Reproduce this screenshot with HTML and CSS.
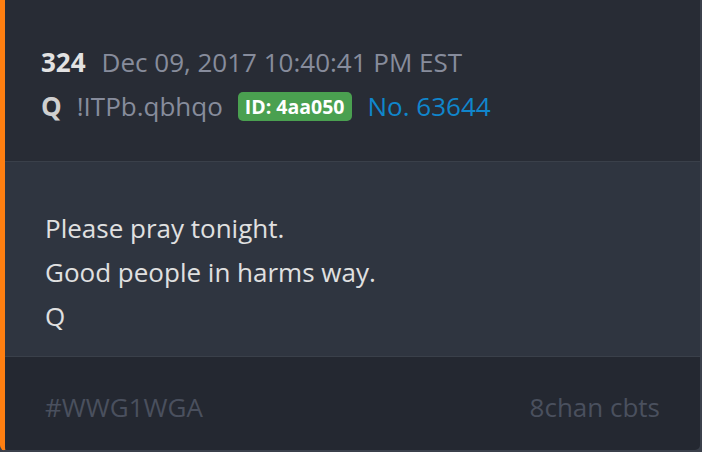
FILE: index.html
```html
<!DOCTYPE html>
<html lang="en">
<head>
    <meta charset="UTF-8">
    <title>Q Post 324</title>
    <link rel="stylesheet" href="styles.css">
</head>
<body>
    <div class="post">
        <div class="post-head">
            <div class="head-row">
                <span class="post-num">324</span>
                <span class="post-date">Dec 09, 2017 10:40:41 PM EST</span>
            </div>
            <div class="head-row">
                <span class="author">Q</span>
                <span class="trip">!ITPb.qbhqo</span>
                <span class="user-id">ID: 4aa050</span>
                <a class="post-link" href="#">No. 63644</a>
            </div>
        </div>
        <div class="post-body">
            <p>Please pray tonight.</p>
            <p>Good people in harms way.</p>
            <p>Q</p>
        </div>
        <div class="post-foot">
            <span>#WWG1WGA</span>
            <span>8chan cbts</span>
        </div>
    </div>
</body>
</html>
```

FILE: styles.css
```css
body {
    margin: 0;
    background-color: #3b404b;
    font-family: "Open Sans", "Noto Sans", sans-serif;
}

.post {
    box-sizing: border-box;
    width: 701px;
    height: 451px;
    display: flex;
    flex-direction: column;
    border: 1px solid #3b414c;
    border-top: none;
    border-left: 5px solid #ff7f11;
    border-radius: 0 0 6px 6px;
    overflow: hidden;
    font-size: 26px;
    line-height: 44px;
}

.post-head {
    background-color: #282c35;
    padding: 40px 0 33px 36px;
    border-bottom: 1px solid #3a404a;
}

.head-row {
    display: flex;
    align-items: center;
    gap: 15px;
}

.post-num {
    color: #e2e2e2;
    font-weight: bold;
}

.post-date {
    color: #878c9c;
    margin-left: 1px;
}

.trip {
    color: #878c9c;
}

.author {
    color: #d0d0d0;
    font-weight: bold;
}

.user-id {
    background-color: #4aa050;
    color: #fff;
    font-size: 19.5px;
    font-weight: bold;
    line-height: 29px;
    padding: 0 7px;
    border-radius: 5px;
}

.post-link {
    color: #1086cc;
    text-decoration: none;
    margin-left: 1px;
}

.post-body {
    flex: 1;
    background-color: #2f3540;
    padding: 44px 0 18px 40px;
    border-bottom: 1px solid #3a404a;
    color: #e0e0e0;
}

.post-body p {
    margin: 0;
}

.post-foot {
    display: flex;
    justify-content: space-between;
    background-color: #242831;
    padding: 28px 40px 21px 40px;
    color: #4a505e;
}
```
